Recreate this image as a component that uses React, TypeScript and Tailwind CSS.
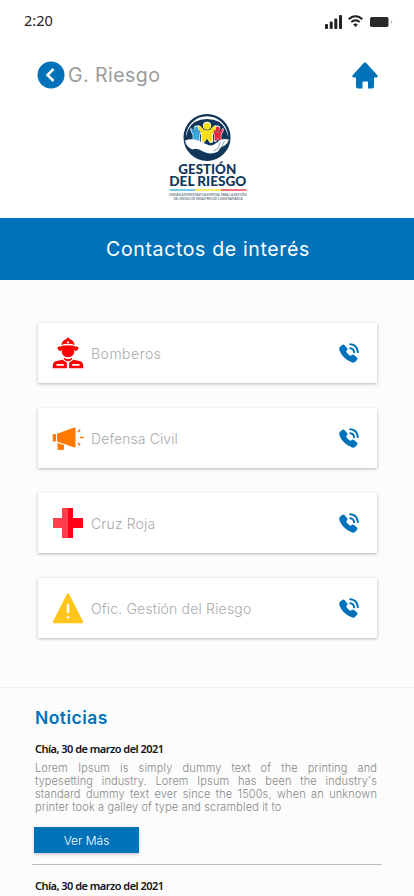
import React from "react";

const BLUE = "#0072ba";

function SignalIcon() {
  return (
    <svg width="17" height="14" viewBox="0 0 17 14" fill="#222">
      <rect x="0" y="9" width="3" height="5" rx="1" />
      <rect x="4.7" y="6.5" width="3" height="7.5" rx="1" />
      <rect x="9.3" y="3.5" width="3" height="10.5" rx="1" />
      <rect x="14" y="0" width="3" height="14" rx="1" />
    </svg>
  );
}

function WifiIcon() {
  return (
    <svg width="15" height="12" viewBox="0 0 15 12" fill="none" stroke="#222" strokeWidth="2">
      <path d="M0.7 4.2C4.5 0.1 10.5 0.1 14.3 4.2" />
      <path d="M3.3 7.1C5.7 4.6 9.3 4.6 11.7 7.1" />
      <path d="M7.5 11.9L5.2 9.5C6.5 8.2 8.5 8.2 9.8 9.5Z" fill="#222" stroke="none" />
    </svg>
  );
}

function BatteryIcon() {
  return (
    <svg width="23" height="10" viewBox="0 0 23 10">
      <rect x="0" y="0" width="18.5" height="10" rx="1.7" fill="#2a2a2a" />
      <path d="M21 3Q23.5 5 21 7Z" fill="#bbb" />
    </svg>
  );
}

function HomeIcon() {
  return (
    <svg width="26" height="27" viewBox="0 0 26 27" fill={BLUE}>
      <path d="M12 .8Q13 -.1 14 .8L25.2 13Q26.5 15 24.4 15.5H22V24.5Q22 26.5 20 26.5H16V20.5Q16 19.5 15 19.5H11.5Q10.5 19.5 10.5 20.5V26.5H6Q4 26.5 4 24.5V15.5H1.5Q-.4 15 .8 13Z" />
    </svg>
  );
}

function Person({ color, transform }: { color: string; transform: string }) {
  return (
    <g transform={transform} fill={color}>
      <circle cx="0" cy="-5.8" r="3.5" />
      <path d="M-3 -2Q0 -.5 3 -2L6.2 -5.8Q8.4 -6.8 8.6 -4.3L5 2.3L5.3 8.5Q4.3 10.8 2.2 9.5L0 6L-2.2 9.5Q-4.3 10.8 -5.3 8.5L-5 2.3L-8.6 -4.3Q-8.4 -6.8 -6.2 -5.8Z" />
    </g>
  );
}

function Logo() {
  return (
    <svg width="90" height="90" viewBox="-5 0 90 90" role="img" aria-label="Gestión del Riesgo">
      <circle cx="40" cy="24.4" r="22.3" fill="#fff" stroke="#12365a" strokeWidth="2.4" />
      <path d="M21 17Q26 6 40 6Q54 6 59 17L61.5 25Q61 40 48 45Q36 49 26 41Q19 35 18.5 25Z" fill="#12365a" />
      <Person color="#fff" transform="translate(40 19) scale(1.18 1.1)" />
      <Person color="#f0f3f6" transform="translate(29.3 20.5) scale(.72 .86)" />
      <Person color="#f0f3f6" transform="translate(50.7 20.5) scale(.72 .86)" />
      <Person color="#32a9e0" transform="translate(29.3 20.5) scale(.6 .74)" />
      <Person color="#ee2737" transform="translate(50.7 20.5) scale(.6 .74)" />
      <Person color="#f8df16" transform="translate(40 19) scale(1.02 1)" />
      <path d="M18 27.5Q26 24.5 33 28.5L42 32.3Q46 33 50 29.5Q55 24.5 61.8 26.5Q60.5 32 54.5 34L51 38.5Q44 42.5 36 38.5Q30 34.5 25.5 36.5Q19 34 18 27.5Z" fill="#fff" />
      <path d="M46.5 38Q52.5 35.5 53 29.5M51 37.5Q56 33.5 57.5 28" fill="none" stroke="#5c7389" strokeWidth=".7" />
      <text x="11.3" y="61.2" textLength="58" lengthAdjust="spacingAndGlyphs" fill="#12365a" fontFamily="Lato, sans-serif" fontWeight="900" fontSize="13.6">GESTIÓN</text>
      <text x="2.3" y="73.4" textLength="77" lengthAdjust="spacingAndGlyphs" fill="#12365a" fontFamily="Lato, sans-serif" fontWeight="900" fontSize="13.6">DEL RIESGO</text>
      <path d="M2.5 77H28" stroke="#45b9e7" strokeWidth="1.5" />
      <path d="M28 77H54" stroke="#f7e32a" strokeWidth="1.5" />
      <path d="M54 77H79.5" stroke="#e84452" strokeWidth="1.5" />
      <text x="2" y="83.3" textLength="77.5" lengthAdjust="spacingAndGlyphs" fill="#32485f" fontFamily="Lato, sans-serif" fontWeight="400" fontSize="3.1">UNIDAD ADMINISTRATIVA ESPECIAL PARA LA GESTIÓN</text>
      <text x="6.5" y="87.3" textLength="69" lengthAdjust="spacingAndGlyphs" fill="#32485f" fontFamily="Lato, sans-serif" fontWeight="400" fontSize="3.1">DEL RIESGO DE DESASTRES DE CUNDINAMARCA</text>
    </svg>
  );
}

function FirefighterIcon() {
  return (
    <svg width="32" height="32" viewBox="0 0 32 32" fill="#f90606">
      <path d="M9.3 8Q10 3.5 14 2.3L15 1Q16 .2 17 1L18 2.3Q22 3.5 22.7 8Q16 5.7 9.3 8ZM16 3.9L14.7 5.3L16 6.5L17.3 5.3Z" fillRule="evenodd" />
      <path d="M5.3 10.3Q16 6.200 26.700 10.300Q26.600 13.300 23.300 14.200L22.300 12.500Q22.800 20.200 16 20.200Q9.200 20.200 9.700 12.500L8.700 14.200Q5.400 13.300 5.300 10.300Z" />
      <path d="M11.800 20.800Q16 23.200 20.200 20.800V22.200Q18.500 24.300 16 24.300Q13.500 24.300 11.800 22.200Z" />
      <path fillRule="evenodd" d="M10.600 22.700L14.900 25.800V31.300H.8V28.500Q.8 24.500 5.500 23.700ZM4.500 27.100V28.800H11.800V27.100Z" />
      <path fillRule="evenodd" d="M21.400 22.700L17.100 25.800V31.300H31.200V28.500Q31.200 24.500 26.500 23.700ZM20.200 27.100V28.800H27.500V27.100Z" />
    </svg>
  );
}

function MegaphoneIcon() {
  return (
    <svg width="32" height="32" viewBox="0 0 32 32" fill="#ff7900">
      <rect x=".7" y="12" width="3.3" height="7.5" rx=".9" />
      <path d="M5 11.8L22.3 5.5Q23.5 5.2 23.5 6.2V24.8Q23.5 25.8 22.5 25.4L5 19.5Z" />
      <path d="M5.5 20.9L12 23.1V27Q12 28 11 28H6.5Q5.5 28 5.5 27Z" />
      <path d="M26.3 9.7L27.6 8.2M28.5 15.5H31M26.3 21.3L27.6 22.8" stroke="#ff7900" strokeWidth="1.7" strokeLinecap="round" />
    </svg>
  );
}

function CrossIcon() {
  return (
    <svg width="32" height="32" viewBox="0 0 32 32" shapeRendering="crispEdges">
      <path d="M10 1H16V31H10V21H1V11H10Z" fill="#ff404c" />
      <path d="M16 1H21V11H31V21H21V31H16Z" fill="#ff0016" />
    </svg>
  );
}

function WarningIcon() {
  return (
    <svg width="32" height="32" viewBox="0 0 32 32">
      <path d="M15 1.8Q16 .7 17 1.8L31 29.5Q31.4 31.2 30 31.2H2Q.6 31.2 1 29.5Z" fill="#ffc51b" />
      <path d="M16 13V20M16 25.3V25.4" stroke="#fff" strokeWidth="2.4" strokeLinecap="round" />
    </svg>
  );
}

function CallIcon() {
  return (
    <svg width="20" height="20" viewBox="0 0 20 20">
      <path d="M.8 4.1L3.1 2Q4.5 .8 5.7 2.3L8.2 5.3Q9 6.5 8 7.4L7 8.5Q8.700 11.300 11.500 13L12.600 12Q13.700 11 15 12L18 14.500Q19 15.500 18 16.900L15.900 19.100Q14.600 20.200 12.100 19.100Q3.400 15.300.5 7.500Q-.1 5.300.8 4.100Z" fill={BLUE} />
      <path d="M11.200 1.200Q18.200 1.700 18.900 9.100M11.200 5.200Q14.800 5.500 15.200 9.300" fill="none" stroke={BLUE} strokeWidth="2" strokeLinecap="round" />
    </svg>
  );
}

const contacts = [
  { name: "Bomberos", icon: <FirefighterIcon />, spacing: "tracking-[0.5px]" },
  { name: "Defensa Civil", icon: <MegaphoneIcon />, spacing: "tracking-[0.1px]" },
  { name: "Cruz Roja", icon: <CrossIcon />, spacing: "tracking-[0.15px]" },
  { name: "Ofic. Gestión del Riesgo", icon: <WarningIcon />, spacing: "tracking-[0.18px]" },
];

const newsLines = [
  "Lorem Ipsum is simply dummy text of the printing and",
  "typesetting industry. Lorem Ipsum has been the industry's",
  "standard dummy text ever since the 1500s, when an unknown",
];

function NewsDate() {
  return (
    <p className="w-fit whitespace-nowrap font-['Noto_Sans',sans-serif] text-[11px] font-semibold leading-4 tracking-[-0.53px] text-[#111]">
      Chía, 30 de marzo del 2021
    </p>
  );
}

export default function App() {
  return (
    <div className="h-[896px] w-full overflow-hidden bg-[#fcfcfc] font-['Inter',sans-serif]">
      <header className="h-[218px] bg-white">
        <div className="flex h-10 items-center justify-between pl-6 pr-[21px]">
          <span className="font-['Noto_Sans',sans-serif] text-[14.5px] leading-5 tracking-[0px] text-[#222]">2:20</span>
          <div className="flex items-center pt-[3px]">
            <SignalIcon />
            <div className="ml-[6px] -mt-0.5"><WifiIcon /></div>
            <div className="ml-[7px]"><BatteryIcon /></div>
          </div>
        </div>
        <div className="flex h-[70px] items-center justify-between pl-[37px] pr-[36px]">
          <div className="flex items-center">
            <svg width="28" height="28" viewBox="0 0 28 28">
              <circle cx="14" cy="14" r="13.5" fill={BLUE} />
              <path d="M16.5 8L10.5 14L16.5 20" fill="none" stroke="#fff" strokeWidth="2.5" />
            </svg>
            <h1 className="ml-[3px] w-fit text-[19.5px] font-normal leading-7 tracking-[0.45px] text-[#9b9b9b]">G. Riesgo</h1>
          </div>
          <HomeIcon />
        </div>
        <div className="flex justify-center pr-px pt-[3px]">
          <Logo />
        </div>
      </header>

      <div className="flex h-[62px] items-center justify-center bg-[#0072ba]">
        <h2 className="ml-[2px] w-fit text-[19.5px] font-normal leading-7 tracking-[0.65px] text-white">Contactos de interés</h2>
      </div>

      <main className="flex h-[408px] flex-col gap-[25px] border-b border-[#efefef] pl-[38px] pr-[37px] pt-[43px]">
        {contacts.map((contact) => (
          <div key={contact.name} className="flex h-[60px] shrink-0 items-center bg-white pl-[14px] pr-[18px] shadow-[0_1px_3px_rgba(0,0,0,0.28)]">
            {contact.icon}
            <span className={`ml-[7px] w-fit whitespace-nowrap pt-px text-[14px] font-light leading-5 text-[#aaa] ${contact.spacing}`}>{contact.name}</span>
            <button className="ml-auto" aria-label={`Llamar a ${contact.name}`}><CallIcon /></button>
          </div>
        ))}
      </main>

      <section className="pl-[35px] pr-[37px] pt-[18px]">
        <h2 className="w-fit text-[17.5px] font-semibold leading-6 tracking-[0.45px] text-[#0072ba]">Noticias</h2>
        <div className="mt-[11px]"><NewsDate /></div>
        <div className="mt-[5px] whitespace-nowrap text-[11px] font-light leading-[13px] tracking-[0.12px] text-[#888]">
          {newsLines.map((line) => (
            <p key={line} className="[text-align-last:justify]">{line}</p>
          ))}
          <p className="w-fit">printer took a galley of type and scrambled it to</p>
        </div>
        <button className="-ml-px mt-[13px] flex h-[26px] w-[105px] items-center justify-center bg-[#0072ba] pt-px text-[12px] font-light leading-4 text-white shadow-[0_2px_3px_rgba(0,0,0,0.18)]">Ver Más</button>
        <hr className="-ml-[3px] -mr-[5px] mt-[11px] border-[#bdbdbd]" />
        <div className="mt-[13px]"><NewsDate /></div>
      </section>
    </div>
  );
}
